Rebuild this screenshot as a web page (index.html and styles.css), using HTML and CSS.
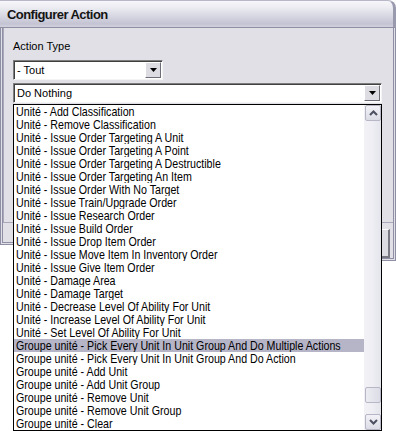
FILE: index.html
```html
<!DOCTYPE html>
<html>
<head>
<meta charset="utf-8">
<link rel="stylesheet" href="styles.css">
</head>
<body>
<div class="window">
  <div class="titlebar"><span class="title">Configurer Action</span></div>
  <div class="client">
    <div class="panel">
      <div class="label">Action Type</div>
      <div class="combo combo-small">
        <div class="field">- Tout</div>
        <div class="arrow-btn"><svg width="7" height="4" viewBox="0 0 7 4"><path d="M0 0h7L3.5 4z" fill="#000"/></svg></div>
      </div>
      <div class="combo combo-wide">
        <div class="field">Do Nothing</div>
        <div class="arrow-btn"><svg width="7" height="4" viewBox="0 0 7 4"><path d="M0 0h7L3.5 4z" fill="#000"/></svg></div>
      </div>
    </div>
  </div>
  <div class="ghost-frame"><div class="ghost-btn"></div></div>
</div>

<div class="dropdown">
  <ul class="items">
    <li><span>Unité - Add Classification</span></li>
    <li><span>Unité - Remove Classification</span></li>
    <li><span>Unité - Issue Order Targeting A Unit</span></li>
    <li><span>Unité - Issue Order Targeting A Point</span></li>
    <li><span>Unité - Issue Order Targeting A Destructible</span></li>
    <li><span>Unité - Issue Order Targeting An Item</span></li>
    <li><span>Unité - Issue Order With No Target</span></li>
    <li><span>Unité - Issue Train/Upgrade Order</span></li>
    <li><span>Unité - Issue Research Order</span></li>
    <li><span>Unité - Issue Build Order</span></li>
    <li><span>Unité - Issue Drop Item Order</span></li>
    <li><span>Unité - Issue Move Item In Inventory Order</span></li>
    <li><span>Unité - Issue Give Item Order</span></li>
    <li><span>Unité - Damage Area</span></li>
    <li><span>Unité - Damage Target</span></li>
    <li><span>Unité - Decrease Level Of Ability For Unit</span></li>
    <li><span>Unité - Increase Level Of Ability For Unit</span></li>
    <li><span>Unité - Set Level Of Ability For Unit</span></li>
    <li class="selected"><span>Groupe unité - Pick Every Unit In Unit Group And Do Multiple Actions</span></li>
    <li><span>Groupe unité - Pick Every Unit In Unit Group And Do Action</span></li>
    <li><span>Groupe unité - Add Unit</span></li>
    <li><span>Groupe unité - Add Unit Group</span></li>
    <li><span>Groupe unité - Remove Unit</span></li>
    <li><span>Groupe unité - Remove Unit Group</span></li>
    <li><span>Groupe unité - Clear</span></li>
  </ul>
  <div class="scrollbar">
    <div class="sb-btn"><svg width="9" height="6" viewBox="0 0 9 6"><path d="M1 5L4.5 1.5L8 5" fill="none" stroke="#4d5060" stroke-width="2"/></svg></div>
    <div class="sb-track">
      <div class="sb-thumb"></div>
    </div>
    <div class="sb-btn"><svg width="9" height="6" viewBox="0 0 9 6"><path d="M1 1L4.5 4.5L8 1" fill="none" stroke="#4d5060" stroke-width="2"/></svg></div>
  </div>
</div>
</body>
</html>
```
FILE: styles.css
```css
html, body {
  margin: 0;
  padding: 0;
  background: #ffffff;
}
body {
  position: relative;
  width: 396px;
  height: 431px;
  overflow: hidden;
  font-family: "Liberation Sans", Arial, sans-serif;
}
.window {
  position: relative;
  width: 396px;
  height: 245px;
  display: flex;
  flex-direction: column;
}
.titlebar {
  height: 28px;
  box-sizing: border-box;
  border-top-right-radius: 8px;
  border-right: 3px solid #9a9aae;
  border-top: 1px solid #b8b8c8;
  background: linear-gradient(to bottom, #f7f7fa 0%, #ececf2 25%, #d6d6e2 60%, #c3c3d3 88%, #d2d2de 100%);
  border-bottom: 1px solid #8e8ea4;
  display: flex;
  align-items: center;
  padding-left: 7px;
}
.title {
  font-weight: bold;
  font-size: 13px;
  letter-spacing: -0.55px;
  color: #141414;
  margin-top: 1px;
}
.client {
  flex: 1;
  background: #e1e0e7;
  border-left: 3px double #8e8ea4;
  border-right: 3px double #8e8ea4;
  border-bottom: 3px double #8e8ea4;
  display: flex;
  flex-direction: column;
}
.panel {
  height: 195px;
  box-sizing: border-box;
  border-left: 1px solid #a8a8ba;
  border-bottom: 1px solid #a8a8ba;
  padding: 12px 0 0 9px;
  display: flex;
  flex-direction: column;
}
.label {
  font-size: 11px;
  color: #000;
  height: 13px;
  line-height: 13px;
  margin-bottom: 7px;
}
.combo {
  height: 20px;
  box-sizing: border-box;
  background: #fff;
  border-top: 1px solid #7d7d7d;
  border-left: 1px solid #7d7d7d;
  border-right: 1px solid #f4f4f4;
  border-bottom: 1px solid #f4f4f4;
  box-shadow: inset 1px 1px 0 #404040;
  display: flex;
  align-items: stretch;
  font-size: 11px;
}
.combo-small {
  width: 150px;
  margin-bottom: 3px;
}
.combo-wide {
  width: 369px;
}
.field {
  flex: 1;
  padding-left: 3px;
  line-height: 18px;
  color: #000;
}
.arrow-btn {
  width: 16px;
  margin: 1px 1px 1px 0;
  box-sizing: border-box;
  background: #dcdce2;
  border-top: 1px solid #ffffff;
  border-left: 1px solid #ffffff;
  border-right: 1px solid #6e6e78;
  border-bottom: 1px solid #6e6e78;
  display: flex;
  align-items: center;
  justify-content: center;
}
.ghost-frame {
  position: absolute;
  right: 0;
  top: 226px;
  width: 44px;
  height: 35px;
  box-sizing: border-box;
  background: #e1e0e7;
  border-right: 3px double #8e8ea4;
  border-bottom: 3px double #8e8ea4;
  padding: 3px 3px 0 0;
  display: flex;
  justify-content: flex-end;
  align-items: flex-start;
}
.ghost-btn {
  width: 30px;
  height: 29px;
  box-sizing: border-box;
  background: #dcdce2;
  border-top: 1px solid #fff;
  border-left: 1px solid #fff;
  border-right: 2px solid #7a7a84;
  border-bottom: 2px solid #7a7a84;
}
.dropdown {
  position: absolute;
  left: 13px;
  top: 104px;
  width: 369px;
  height: 327px;
  box-sizing: border-box;
  border: 1px solid #000;
  background: #fff;
  display: flex;
}
.items {
  list-style: none;
  margin: 0;
  padding: 0;
  flex: 1;
  overflow: hidden;
  font-family: "Liberation Sans", Arial, sans-serif;
  font-size: 13px;
  color: #000;
}
.items li {
  height: 13px;
  line-height: 13px;
  padding-left: 2px;
  white-space: nowrap;
  overflow: hidden;
}
.items li span {
  display: inline-block;
  transform: scaleX(0.82);
  transform-origin: 0 50%;
}
.items li.selected {
  background: #b6b5c8;
}
.scrollbar {
  width: 17px;
  display: flex;
  flex-direction: column;
  background: linear-gradient(to right, #f2f2f6, #eeeef4 50%, #e4e4ec);
}
.sb-btn {
  height: 16px;
  width: 16px;
  margin-left: 1px;
  box-sizing: border-box;
  border: 1px solid #b6b6c6;
  border-radius: 2px;
  background: linear-gradient(to bottom, #f2f2f7, #dcdce6);
  display: flex;
  align-items: center;
  justify-content: center;
}
.sb-track {
  flex: 1;
  display: flex;
  flex-direction: column;
  justify-content: flex-end;
  padding-bottom: 11px;
}
.sb-thumb {
  height: 16px;
  width: 16px;
  margin-left: 1px;
  box-sizing: border-box;
  border: 1px solid #b6b6c6;
  border-radius: 2px;
  background: linear-gradient(to right, #ececf2, #dcdce6);
}
```
